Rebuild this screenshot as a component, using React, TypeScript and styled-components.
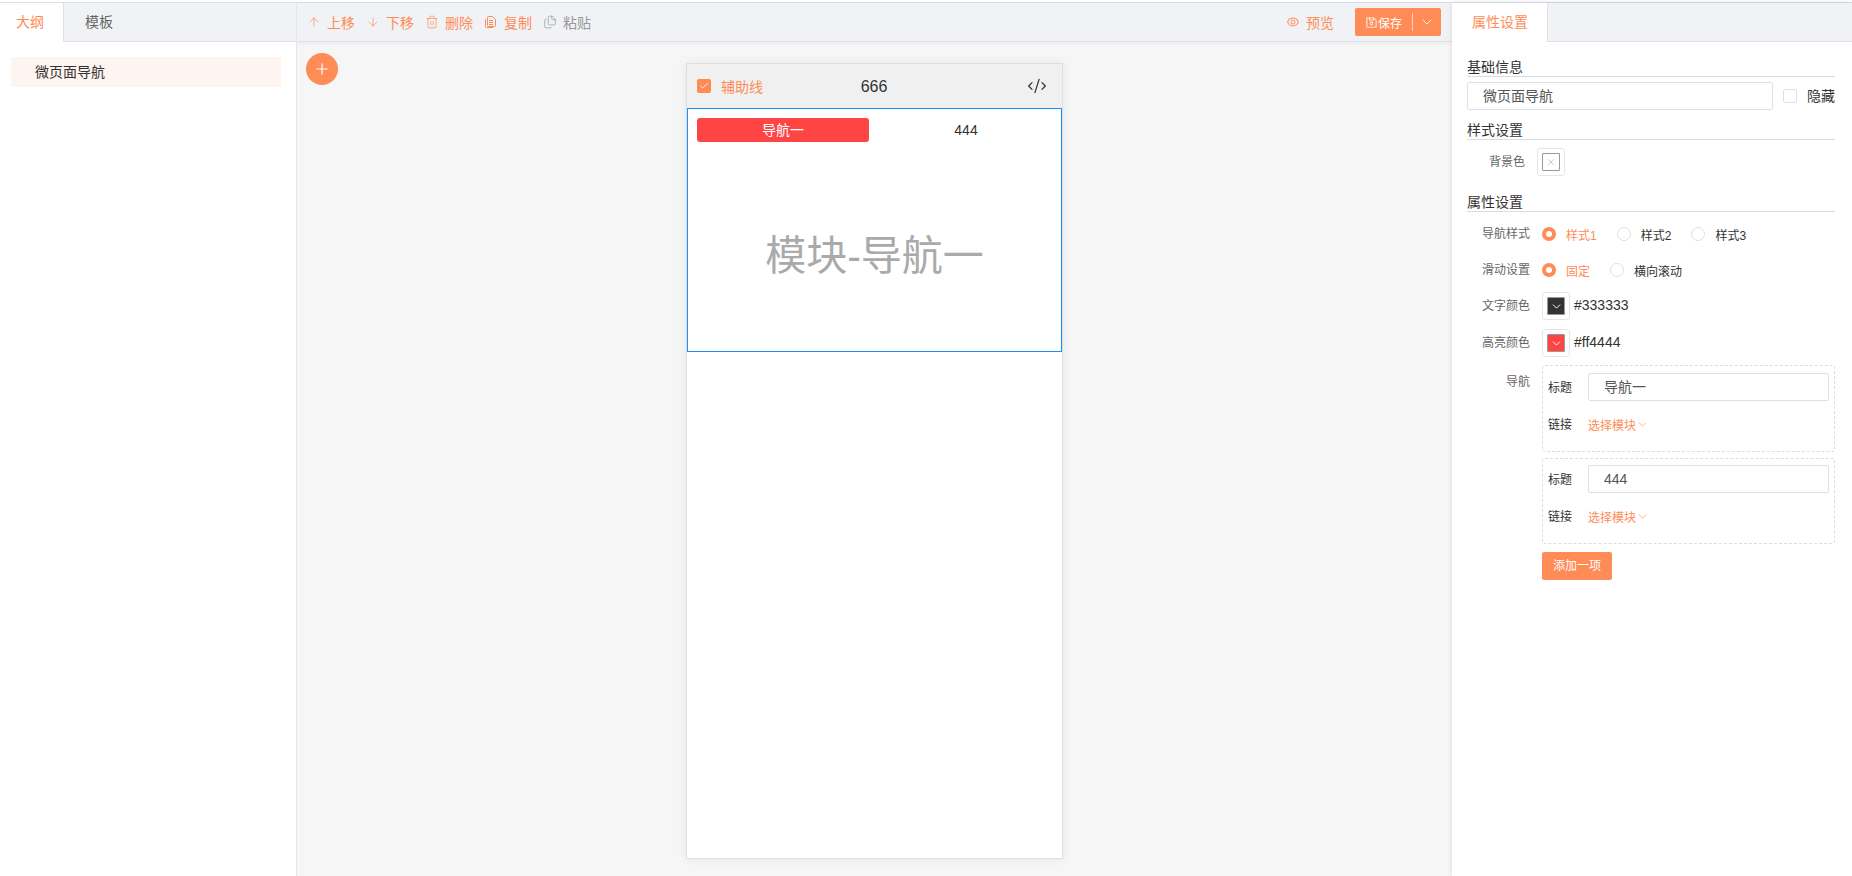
import React from "react";
import styled, { createGlobalStyle } from "styled-components";
import { AiOutlineEye, AiOutlineSave } from "react-icons/ai";
import { ArrowDown, ArrowUp, Check, ChevronDown, CodeXml, Files, Plus, Trash2, X } from "lucide-react";

const ORANGE = "#ff8c56";

const GlobalStyle = createGlobalStyle`
  *, *::before, *::after {
    box-sizing: border-box;
  }
  html, body {
    margin: 0;
    height: 100%;
    overflow: hidden;
  }
  body {
    font-family: "Liberation Sans", "Noto Sans CJK SC", sans-serif;
    font-size: 14px;
    color: #333;
    background: #fff;
  }
`;

const Page = styled.div`
  height: 876px;
  padding-top: 2px;
  display: flex;
  flex-direction: column;
`;

const Main = styled.div`
  flex: 1;
  min-height: 0;
  display: flex;
  border-top: 1px solid #dcdfe6;
`;

const LeftPanel = styled.aside`
  width: 297px;
  flex: none;
  background: #fff;
  border-right: 1px solid #e4e6eb;
  z-index: 2;
`;

const TabBar = styled.div`
  height: 39px;
  display: flex;
  background: #f1f2f6;
  border-bottom: 1px solid #dfe1e8;
`;

const Tab = styled.div<{ $active?: boolean }>`
  height: ${(p) => (p.$active ? "39px" : "38px")};
  padding: 0 21px;
  line-height: 38px;
  color: ${(p) => (p.$active ? ORANGE : "#666")};
  background: ${(p) => (p.$active ? "#fff" : "transparent")};
  border-right: ${(p) => (p.$active ? "1px solid #dfe1e8" : "0")};

  &:first-child {
    padding: 0 19px 0 16px;
  }
`;

const PanelTab = styled(Tab)`
  &:first-child {
    padding: 0 19px 0 20px;
  }
`;

const OutlineList = styled.div`
  padding: 15px 15px 0 11px;
`;

const OutlineItem = styled.div`
  height: 30px;
  padding-left: 24px;
  line-height: 30px;
  color: #333;
  background: #fff5f0;
`;

const Center = styled.main`
  flex: 1;
  min-width: 0;
  display: flex;
  flex-direction: column;
  background: #f6f6f6;
`;

const Toolbar = styled.div`
  height: 39px;
  flex: none;
  padding: 0 11px 0 10px;
  display: flex;
  align-items: center;
  gap: 11px;
  background: #f1f2f6;
  border-bottom: 1px solid #dfe1e8;
  box-shadow: 0 1px 4px rgba(0, 0, 0, 0.05);
`;

const ToolButton = styled.div<{ $muted?: boolean }>`
  display: flex;
  align-items: center;
  gap: 6px;
  color: ${(p) => (p.$muted ? "#999" : ORANGE)};
  white-space: nowrap;

  svg {
    width: 14px;
    height: 14px;
    flex: none;
  }
`;

const ToolSpacer = styled.div`
  flex: 1;
`;

const SaveButton = styled.div`
  width: 86px;
  height: 28px;
  margin-left: 10px;
  padding-left: 10px;
  display: flex;
  align-items: center;
  font-size: 12px;
  color: #fff;
  background: ${ORANGE};
  border-radius: 2px;

  svg:first-child {
    width: 13px;
    height: 13px;
  }
`;

const SaveDivider = styled.span`
  width: 1px;
  height: 18px;
  margin: 0 6px 0 10px;
  background: rgba(255, 255, 255, 0.6);
`;

const Canvas = styled.div`
  position: relative;
  flex: 1;
  min-height: 0;
  padding-top: 21px;
`;

const AddModule = styled.div`
  position: absolute;
  left: 9px;
  top: 11px;
  width: 32px;
  height: 32px;
  display: flex;
  align-items: center;
  justify-content: center;
  color: #fff;
  background: ${ORANGE};
  border-radius: 50%;
`;

const Phone = styled.div`
  width: 377px;
  height: 796px;
  margin: 0 auto;
  background: #fff;
  border: 1px solid #e0e0e0;
  box-shadow: 0 0 10px rgba(0, 0, 0, 0.07);
`;

const PhoneHeader = styled.div`
  height: 44px;
  padding: 0 15px 0 10px;
  display: grid;
  grid-template-columns: 1fr auto 1fr;
  align-items: center;
  background: #f0f0f0;
`;

const GuideToggle = styled.div`
  display: flex;
  align-items: center;
  gap: 10px;
  color: ${ORANGE};
`;

const CheckMark = styled.span`
  width: 14px;
  height: 14px;
  display: flex;
  align-items: center;
  justify-content: center;
  color: #fff;
  background: ${ORANGE};
  border-radius: 2px;
`;

const PageTitle = styled.div`
  padding: 1px 0 0 4px;
  font-size: 16px;
  color: #333;
`;

const CodeButton = styled.div`
  display: flex;
  justify-content: flex-end;
  color: #333;
`;

const Module = styled.div`
  height: 244px;
  padding: 9px 0 0 9px;
  display: flex;
  flex-direction: column;
  border: 1px solid #1890ff;
`;

const NavTabs = styled.div`
  display: flex;
  height: 24px;
  flex: none;
`;

const NavTab = styled.div<{ $active?: boolean }>`
  flex: ${(p) => (p.$active ? "0 0 172px" : "1")};
  padding-left: ${(p) => (p.$active ? "0" : "2px")};
  line-height: 24px;
  text-align: center;
  color: ${(p) => (p.$active ? "#fff" : "#333")};
  background: ${(p) => (p.$active ? "#ff4444" : "transparent")};
  border-radius: 3px;
`;

const ModuleLabel = styled.div`
  flex: 1;
  padding-right: 9px;
  padding-top: 10px;
  display: flex;
  align-items: center;
  justify-content: center;
  font-size: 41px;
  color: #aaa;
`;

const RightPanel = styled.aside`
  width: 400px;
  flex: none;
  background: #fff;
  box-shadow: 0 0 5px rgba(0, 0, 0, 0.12);
  z-index: 2;
`;

const PanelBody = styled.div`
  padding: 15px 17px 0 15px;
`;

const SectionTitle = styled.div<{ $top?: number }>`
  height: 20px;
  margin-top: ${(p) => p.$top ?? 0}px;
  line-height: 21px;
  color: #333;
  border-bottom: 1px solid #dcdcdc;
`;

const NameRow = styled.div`
  margin-top: 5px;
  display: flex;
  align-items: center;
`;

const TextBox = styled.div<{ $width?: number }>`
  width: ${(p) => (p.$width ? `${p.$width}px` : "auto")};
  flex: ${(p) => (p.$width ? "none" : "1")};
  height: 28px;
  padding-left: 15px;
  line-height: 26px;
  color: #555;
  border: 1px solid #dcdfe6;
  border-radius: 2px;
`;

const HideToggle = styled.div`
  margin-left: 10px;
  display: flex;
  align-items: center;
  gap: 10px;
  line-height: 18px;
`;

const EmptyCheck = styled.span`
  width: 14px;
  height: 14px;
  border: 1px solid #dcdfe6;
  border-radius: 2px;
`;

const FormRow = styled.div<{ $labelWidth?: number; $top?: number }>`
  margin-top: ${(p) => p.$top ?? 8}px;
  display: grid;
  grid-template-columns: ${(p) => p.$labelWidth ?? 63}px 1fr;
  column-gap: 12px;
  align-items: center;
  min-height: 28px;
`;

const RowLabel = styled.div<{ $alignTop?: boolean }>`
  align-self: ${(p) => (p.$alignTop ? "start" : "center")};
  margin-top: ${(p) => (p.$alignTop ? "7px" : "-3px")};
  font-size: 12px;
  text-align: right;
  color: #666;
`;

const RadioGroup = styled.div`
  display: flex;
  align-items: center;
  gap: 20px;
`;

const RadioItem = styled.div<{ $checked?: boolean }>`
  display: flex;
  align-items: center;
  gap: 10px;
  font-size: 12px;
  color: ${(p) => (p.$checked ? ORANGE : "#333")};

  &::before {
    content: "";
    width: 14px;
    height: 14px;
    flex: none;
    background: #fff;
    border: ${(p) => (p.$checked ? `4.5px solid ${ORANGE}` : "1px solid #dcdfe6")};
    border-radius: 50%;
  }
`;

const Swatch = styled.div`
  width: 28px;
  height: 28px;
  padding: 4px;
  background: #fff;
  border: 1px solid #e6e6e6;
  border-radius: 3px;
`;

const SwatchFill = styled.div<{ $color?: string }>`
  width: 18px;
  height: 18px;
  display: flex;
  align-items: center;
  justify-content: center;
  color: ${(p) => (p.$color ? "#fff" : "#999")};
  background: ${(p) => p.$color ?? "#fff"};
  border: 1px solid #999;
  border-radius: 1px;
`;

const ColorField = styled.div`
  display: flex;
  gap: 4px;
  color: #333;
  line-height: 26px;
`;

const NavItemBox = styled.div`
  padding: 7px 5px 13px;
  border: 1px dashed #ddd;
  border-radius: 3px;

  & + & {
    margin-top: 6px;
    padding-top: 6px;
  }
`;

const NavField = styled.div`
  display: grid;
  grid-template-columns: 40px 1fr;
  align-items: center;
  min-height: 28px;

  & + & {
    margin-top: 9px;
  }
`;

const FieldLabel = styled.div`
  margin-top: -2px;
  font-size: 12px;
  color: #333;
`;

const LinkPicker = styled.div`
  display: flex;
  align-items: center;
  font-size: 12px;
  color: ${ORANGE};
`;

const AddButton = styled.div`
  width: 70px;
  height: 28px;
  margin-top: 8px;
  line-height: 28px;
  text-align: center;
  font-size: 12px;
  color: #fff;
  background: ${ORANGE};
  border-radius: 2px;
`;

const navItems = [
  { title: "导航一" },
  { title: "444" },
];

// stacked page with text lines, the toolbar's copy icon
const CopyIcon = () => (
  <svg viewBox="0 0 14 14" fill="none" stroke="currentColor" strokeWidth="1">
    <path d="M4.5 1.5h4l3 3v6a1 1 0 0 1-1 1h-6a1 1 0 0 1-1-1v-8a1 1 0 0 1 1-1z" />
    <path d="M5 5.5h4M5 7.5h4M5 9.5h4" />
    <path d="M1.5 4v7.5a1 1 0 0 0 1 1H9" />
  </svg>
);

const App: React.FC = () => {
  return (
    <Page>
      <GlobalStyle />
      <Main>
        <LeftPanel>
          <TabBar>
            <Tab $active>大纲</Tab>
            <Tab>模板</Tab>
          </TabBar>
          <OutlineList>
            <OutlineItem>微页面导航</OutlineItem>
          </OutlineList>
        </LeftPanel>

        <Center>
          <Toolbar>
            <ToolButton><ArrowUp strokeWidth={1.25} />上移</ToolButton>
            <ToolButton><ArrowDown strokeWidth={1.25} />下移</ToolButton>
            <ToolButton><Trash2 strokeWidth={1.25} />删除</ToolButton>
            <ToolButton><CopyIcon />复制</ToolButton>
            <ToolButton $muted><Files strokeWidth={1.25} />粘贴</ToolButton>
            <ToolSpacer />
            <ToolButton><AiOutlineEye />预览</ToolButton>
            <SaveButton>
              <AiOutlineSave />
              保存
              <SaveDivider />
              <ChevronDown size={16} strokeWidth={1.25} />
            </SaveButton>
          </Toolbar>
          <Canvas>
            <AddModule><Plus size={18} strokeWidth={1.5} /></AddModule>
            <Phone>
              <PhoneHeader>
                <GuideToggle>
                  <CheckMark><Check size={10} strokeWidth={2} /></CheckMark>
                  辅助线
                </GuideToggle>
                <PageTitle>666</PageTitle>
                <CodeButton><CodeXml size={20} strokeWidth={1.5} /></CodeButton>
              </PhoneHeader>
              <Module>
                <NavTabs>
                  <NavTab $active>导航一</NavTab>
                  <NavTab>444</NavTab>
                </NavTabs>
                <ModuleLabel>模块-导航一</ModuleLabel>
              </Module>
            </Phone>
          </Canvas>
        </Center>

        <RightPanel>
          <TabBar>
            <PanelTab $active>属性设置</PanelTab>
          </TabBar>
          <PanelBody>
            <SectionTitle>基础信息</SectionTitle>
            <NameRow>
              <TextBox $width={306}>微页面导航</TextBox>
              <HideToggle>
                <EmptyCheck />
                隐藏
              </HideToggle>
            </NameRow>

            <SectionTitle $top={10}>样式设置</SectionTitle>
            <FormRow $labelWidth={58}>
              <RowLabel>背景色</RowLabel>
              <Swatch>
                <SwatchFill><X size={10} strokeWidth={1.25} /></SwatchFill>
              </Swatch>
            </FormRow>

            <SectionTitle $top={16}>属性设置</SectionTitle>
            <FormRow>
              <RowLabel>导航样式</RowLabel>
              <RadioGroup>
                <RadioItem $checked>样式1</RadioItem>
                <RadioItem>样式2</RadioItem>
                <RadioItem>样式3</RadioItem>
              </RadioGroup>
            </FormRow>
            <FormRow>
              <RowLabel>滑动设置</RowLabel>
              <RadioGroup>
                <RadioItem $checked>固定</RadioItem>
                <RadioItem>横向滚动</RadioItem>
              </RadioGroup>
            </FormRow>
            <FormRow>
              <RowLabel>文字颜色</RowLabel>
              <ColorField>
                <Swatch>
                  <SwatchFill $color="#333333"><ChevronDown size={13} strokeWidth={1.75} /></SwatchFill>
                </Swatch>
                #333333
              </ColorField>
            </FormRow>
            <FormRow $top={9}>
              <RowLabel>高亮颜色</RowLabel>
              <ColorField>
                <Swatch>
                  <SwatchFill $color="#ff4444"><ChevronDown size={13} strokeWidth={1.75} /></SwatchFill>
                </Swatch>
                #ff4444
              </ColorField>
            </FormRow>
            <FormRow>
              <RowLabel $alignTop>导航</RowLabel>
              <div>
                {navItems.map((item) => (
                  <NavItemBox key={item.title}>
                    <NavField>
                      <FieldLabel>标题</FieldLabel>
                      <TextBox>{item.title}</TextBox>
                    </NavField>
                    <NavField>
                      <FieldLabel>链接</FieldLabel>
                      <LinkPicker>
                        选择模块
                        <ChevronDown size={13} strokeWidth={1.25} />
                      </LinkPicker>
                    </NavField>
                  </NavItemBox>
                ))}
                <AddButton>添加一项</AddButton>
              </div>
            </FormRow>
          </PanelBody>
        </RightPanel>
      </Main>
    </Page>
  );
};

export default App;
